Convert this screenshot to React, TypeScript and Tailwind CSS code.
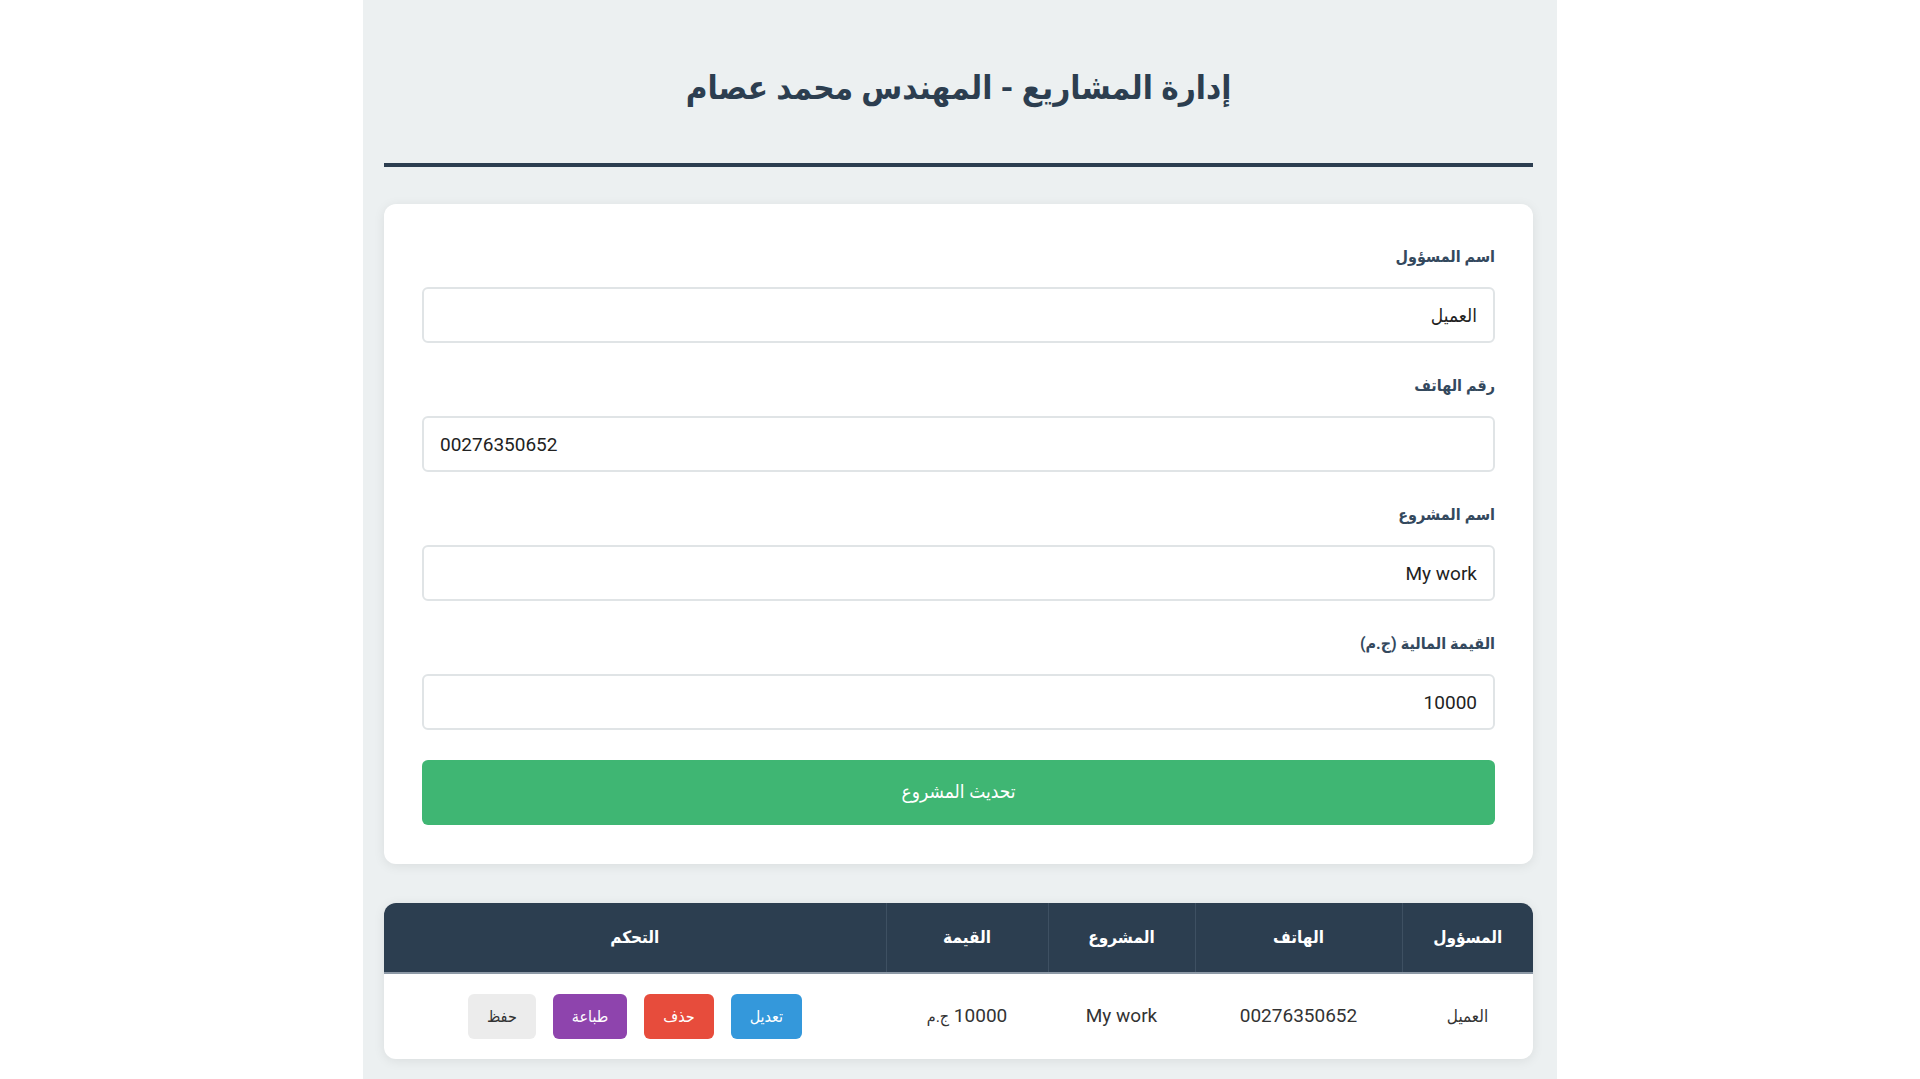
import { useState } from "react";

type Project = {
  owner: string;
  phone: string;
  name: string;
  value: string;
};

const fields: { key: keyof Project; label: string; dir?: "ltr" | "rtl" }[] = [
  { key: "owner", label: "اسم المسؤول" },
  { key: "phone", label: "رقم الهاتف", dir: "ltr" },
  { key: "name", label: "اسم المشروع" },
  { key: "value", label: "القيمة المالية (ج.م)" },
];

export default function App() {
  const [form, setForm] = useState<Project>({
    owner: "العميل",
    phone: "00276350652",
    name: "My work",
    value: "10000",
  });
  const [rows] = useState<Project[]>([
    { owner: "العميل", phone: "00276350652", name: "My work", value: "10000" },
  ]);

  return (
    <div
      dir="rtl"
      className="min-h-screen bg-white"
      style={{ fontFamily: 'Roboto, "DejaVu Sans Condensed", "DejaVu Sans", sans-serif' }}
    >
      <div className="mx-auto w-[1194px] min-h-screen bg-[#ecf0f1] pr-[24px] pl-[21px] pb-[40px]">
        {/* Header */}
        <div className="pt-[64px] pb-[51px] border-b-[4px] border-[#2c3e50]">
          <h1 className="text-center text-[33px] leading-[48px] font-bold text-[#2c3e50]">
            إدارة المشاريع - المهندس محمد عصام
          </h1>
        </div>

        {/* Form */}
        <div className="mt-[37px] rounded-[12px] bg-white px-[38px] pt-[40px] pb-[39px] shadow-[0_2px_12px_rgba(0,0,0,0.08)]">
          {fields.map((f) => (
            <div key={f.key} className="mb-[30px]">
              <label className="block mb-[18px] text-[16px] leading-[25px] font-bold text-[#34495e]">
                {f.label}
              </label>
              <input
                type="text"
                dir={f.dir}
                value={form[f.key]}
                onChange={(e) => setForm({ ...form, [f.key]: e.target.value })}
                className="block w-full h-[56px] rounded-[6px] border-2 border-[#e0e4e6] bg-white px-[16px] text-[19px] text-[#222] outline-none"
              />
            </div>
          ))}
          <button className="w-full h-[65px] rounded-[6px] bg-[#3fb673] text-[19px] text-white">
            تحديث المشروع
          </button>
        </div>

        {/* Table */}
        <div className="mt-[39px] overflow-hidden rounded-[12px] bg-white shadow-[0_2px_12px_rgba(0,0,0,0.08)]">
          <table className="w-full border-collapse">
            <thead>
              <tr className="h-[70px] bg-[#2c3e50] text-white text-[17px] font-bold">
                <th className="w-[131px] border-l border-[#3e5062] border-b-2 border-b-[#8d99a6] font-bold">
                  المسؤول
                </th>
                <th className="w-[207px] border-l border-[#3e5062] border-b-2 border-b-[#8d99a6] font-bold">
                  الهاتف
                </th>
                <th className="w-[147px] border-l border-[#3e5062] border-b-2 border-b-[#8d99a6] font-bold">
                  المشروع
                </th>
                <th className="w-[162px] border-l border-[#3e5062] border-b-2 border-b-[#8d99a6] font-bold">
                  القيمة
                </th>
                <th className="border-b-2 border-b-[#8d99a6] font-bold">التحكم</th>
              </tr>
            </thead>
            <tbody>
              {rows.map((r, i) => (
                <tr key={i} className="h-[86px] text-[19px] text-[#333]">
                  <td className="text-center text-[17px]">{r.owner}</td>
                  <td className="text-center">{r.phone}</td>
                  <td className="text-center">{r.name}</td>
                  <td className="text-center">
                    {r.value} <span className="text-[16px]">ج.م</span>
                  </td>
                  <td className="text-center">
                    <div className="flex justify-center gap-[17px]">
                      <button className="h-[45px] px-[19px] rounded-[6px] bg-[#3498db] text-[16px] text-white">
                        تعديل
                      </button>
                      <button className="h-[45px] px-[19px] rounded-[6px] bg-[#e74c3c] text-[16px] text-white">
                        حذف
                      </button>
                      <button className="h-[45px] px-[19px] rounded-[6px] bg-[#8e44ad] text-[16px] text-white">
                        طباعة
                      </button>
                      <button className="h-[45px] px-[19px] rounded-[6px] bg-[#ececec] text-[16px] text-[#333]">
                        حفظ
                      </button>
                    </div>
                  </td>
                </tr>
              ))}
            </tbody>
          </table>
        </div>
      </div>
    </div>
  );
}
